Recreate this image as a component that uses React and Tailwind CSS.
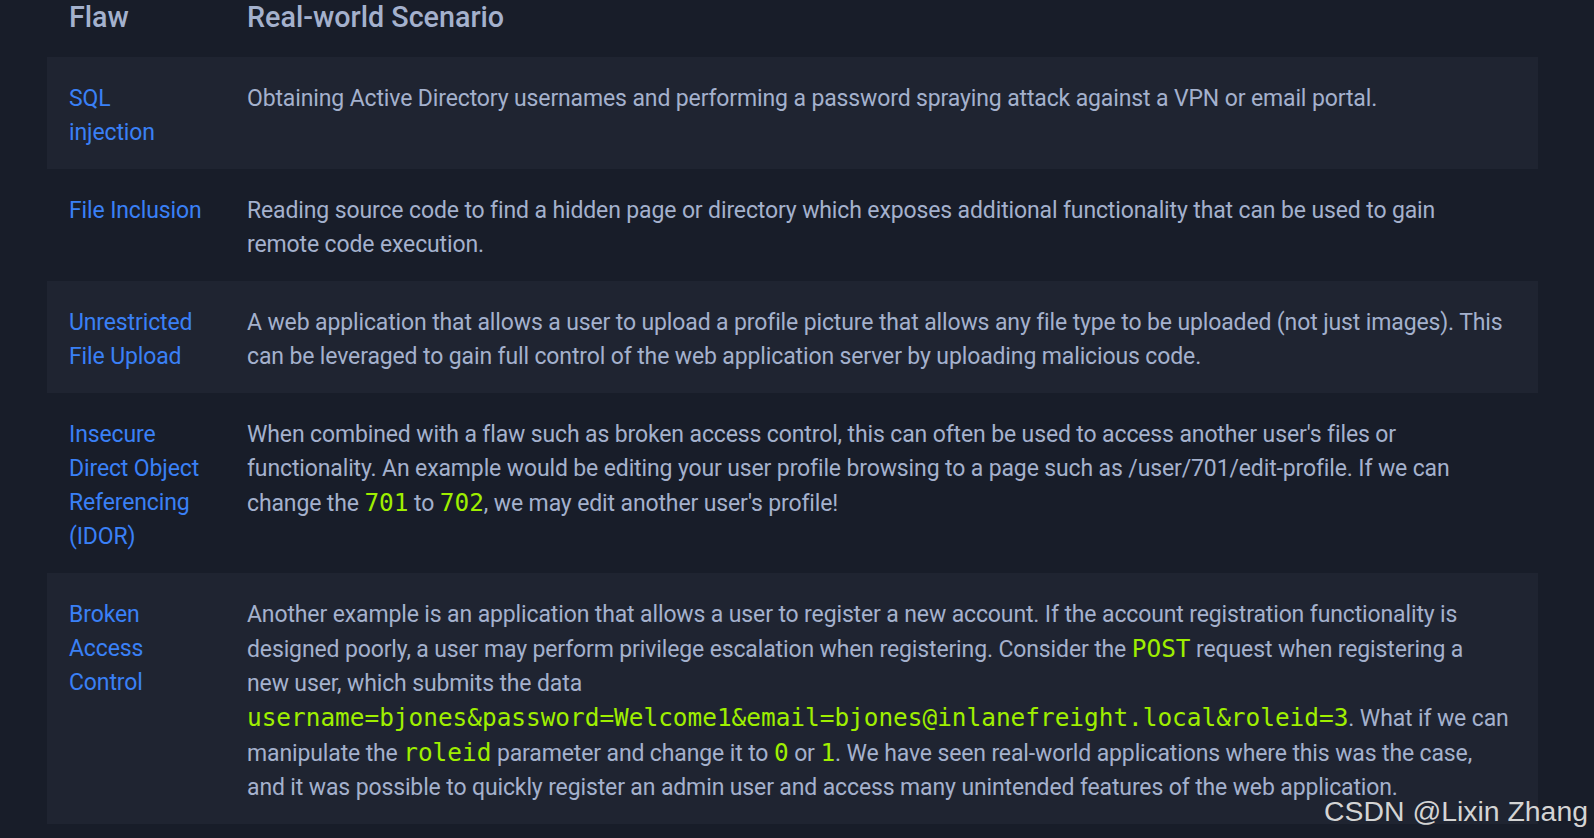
import React from "react";

const Code = ({ children }) => (
  <code className="font-['DejaVu_Sans_Mono',monospace] text-[24.4px] tracking-normal text-[#9fef00]">{children}</code>
);

const rows = [
  {
    flaw: ["SQL", "injection"],
    text: (
      <>Obtaining Active Directory usernames and performing a password spraying attack against a VPN or email portal.</>
    ),
  },
  {
    flaw: ["File Inclusion"],
    text: (
      <>
        Reading source code to find a hidden page or directory which exposes additional functionality that can be used to gain
        <br />
        remote code execution.
      </>
    ),
  },
  {
    flaw: ["Unrestricted", "File Upload"],
    text: (
      <>
        A web application that allows a user to upload a profile picture that allows any file type to be uploaded (not just images). This
        <br />
        can be leveraged to gain full control of the web application server by uploading malicious code.
      </>
    ),
  },
  {
    flaw: ["Insecure", "Direct Object", "Referencing", "(IDOR)"],
    text: (
      <>
        When combined with a flaw such as broken access control, this can often be used to access another user's files or
        <br />
        functionality. An example would be editing your user profile browsing to a page such as /user/701/edit-profile. If we can
        <br />
        change the <Code>701</Code> to <Code>702</Code>, we may edit another user's profile!
      </>
    ),
  },
  {
    flaw: ["Broken", "Access", "Control"],
    text: (
      <>
        Another example is an application that allows a user to register a new account. If the account registration functionality is
        <br />
        designed poorly, a user may perform privilege escalation when registering. Consider the <Code>POST</Code> request when registering a
        <br />
        new user, which submits the data
        <br />
        <Code>username=bjones&amp;password=Welcome1&amp;email=bjones@inlanefreight.local&amp;roleid=3</Code>. What if we can
        <br />
        manipulate the <Code>roleid</Code> parameter and change it to <Code>0</Code> or <Code>1</Code>. We have seen real-world applications where this was the case,
        <br />
        and it was possible to quickly register an admin user and access many unintended features of the web application.
      </>
    ),
  },
];

export default function App() {
  return (
    <div className="relative min-h-screen w-full overflow-hidden bg-[#181d29] font-[Roboto,sans-serif] text-[#a4b1cd]">
      <div className="pl-[47px] pr-[56px]">
        <div className="grid h-[57px] grid-cols-[200px_1fr] text-[28.7px] font-medium leading-[36px]">
          <div className="-mt-[1px] pl-[22px]">Flaw</div>
          <div className="-mt-[1px]">Real-world Scenario</div>
        </div>
        {rows.map((row, i) => (
          <div
            key={i}
            className={`grid grid-cols-[200px_1fr] pt-[25px] pb-[19px] text-[23px] leading-[34px] tracking-[-0.13px] ${
              i % 2 === 0 ? "bg-[#1f2431]" : "bg-[#181d29]"
            }`}
          >
            <div className="pl-[22px] text-[#3a80f6]">
              {row.flaw.map((f) => (
                <div key={f} className="whitespace-nowrap">{f}</div>
              ))}
            </div>
            <div className="whitespace-nowrap pr-[22px]">{row.text}</div>
          </div>
        ))}
      </div>
      <div className="absolute bottom-[11px] right-[6px] font-['Liberation_Sans',Arial,sans-serif] text-[28.4px] leading-[32px] text-[#d4d4d4]">
        CSDN @Lixin Zhang
      </div>
    </div>
  );
}
